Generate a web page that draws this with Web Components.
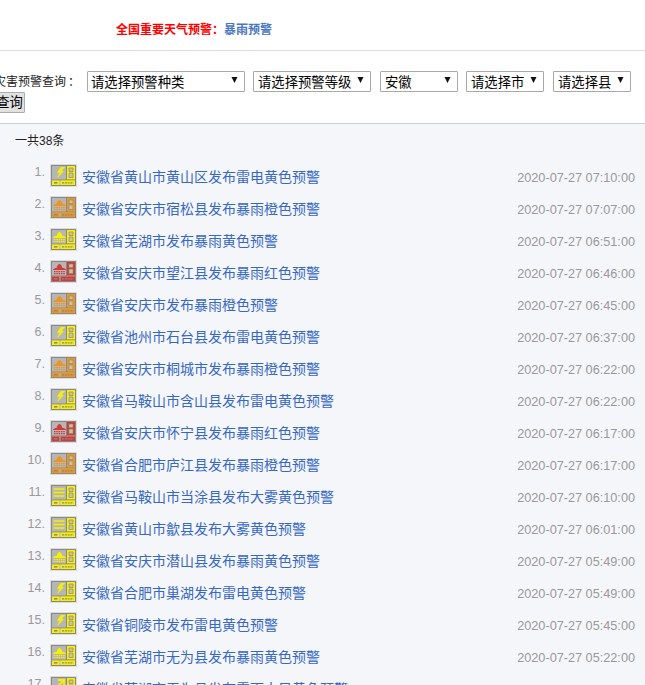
<!DOCTYPE html>
<html lang="zh">
<head>
<meta charset="utf-8">
<title>预警列表</title>
<style>
  html, body { margin: 0; height: 685px; overflow: hidden; background: #fff; }
  body { font-family: "Liberation Sans", "Noto Sans CJK SC", sans-serif; }
</style>
</head>
<body>
<top-notice label="全国重要天气预警" value="暴雨预警"></top-notice>
<filter-bar>
  <fake-select style="width:158px;margin-right:8px;padding-left:3px" text="请选择预警种类"></fake-select>
  <fake-select style="width:118px;margin-right:9px" text="请选择预警等级"></fake-select>
  <fake-select style="width:78px;margin-right:8px" text="安徽"></fake-select>
  <fake-select style="width:78px;margin-right:9px" text="请选择市"></fake-select>
  <fake-select style="width:78px" text="请选择县"></fake-select>
</filter-bar>
<alert-list id="list" total="一共38条"></alert-list>

<script>
const LATIN = '"Liberation Sans", "Noto Sans CJK SC", sans-serif';
// the TC face centres the full-width colon, as the reference does
const COLON = 'font-family: "Noto Sans CJK TC", sans-serif; font-style: normal;';

class TopNotice extends HTMLElement {
  connectedCallback() {
    this.attachShadow({ mode: 'open' }).innerHTML = `
    <style>
      :host {
        display: block;
        height: 51px;
        box-sizing: border-box;
        padding: 20px 0 0 116px;
        border-bottom: 1px solid #ddd;
        font: bold 12px/17px ${LATIN};
      }
      .label { color: #f00; }
      .label i { ${COLON} }
      .value { color: #4a76c4; }
    </style>
    <span class="label">${this.getAttribute('label')}<i>：</i></span><span class="value">${this.getAttribute('value')}</span>`;
  }
}

class FakeSelect extends HTMLElement {
  connectedCallback() {
    this.attachShadow({ mode: 'open' }).innerHTML = `
    <style>
      :host {
        display: flex;
        flex: none;
        align-items: center;
        justify-content: space-between;
        box-sizing: border-box;
        height: 21px;
        padding: 0 4px;
        border: 1px solid #a9a9a9;
        border-radius: 1px;
        background: #fff;
        color: #000;
        font: 13.33px/19px ${LATIN};
      }
      span { margin-top: 1px; }
      svg { flex: none; margin: -3px 1px 0 0; }
    </style>
    <span>${this.getAttribute('text')}</span>
    <svg width="9" height="8" viewBox="0 0 9 8"><path d="M1.500 1h6L4.500 7z" fill="#111"/></svg>`;
  }
}

class FilterBar extends HTMLElement {
  connectedCallback() {
    this.attachShadow({ mode: 'open' }).innerHTML = `
    <style>
      :host {
        display: block;
        height: 73px;
        box-sizing: border-box;
        padding-top: 20px;
        margin-left: -6px;
        border-bottom: 1px solid #c8d0dc;
        white-space: nowrap;
      }
      .row { display: flex; align-items: center; height: 21px; }
      .label {
        flex: none;
        width: 93px;
        color: #222;
        font: 12px/21px ${LATIN};
      }
      .label i { ${COLON} margin-left: 2px; }
      button {
        display: block;
        width: 31px;
        height: 21px;
        padding: 0;
        border: 1px solid #adadad;
        border-radius: 1px;
        background: #e1e1e1;
        color: #000;
        font: 13.33px/19px ${LATIN};
      }
    </style>
    <div class="row"><span class="label">灾害预警查询<i>：</i></span><slot></slot></div>
    <button>查询</button>`;
  }
}

// icon kinds: t = thunder, c = cloud and rain, f = fog, w = wind
const ICON_COLORS = { y: '#f7f000', o: '#ee9420', r: '#d23a3a' };

class AlertIcon extends HTMLElement {
  connectedCallback() {
    const c = ICON_COLORS[this.getAttribute('level')];
    const kind = this.getAttribute('kind');
    const pictures = {
      t: `<path d="M11 3h4l-3.500 4h2.500l-7 7.500 2.500-6h-2.500z" fill="${c}"/>`,
      c: `<path d="M3 10c.5-1.500 2-2 3.500-2 .8-2.500 2-4 3-4s2.200 1.500 3 4c1.500 0 3 .5 3.500 2z" fill="${c}"/>
          <path d="M4 11.700h11M4 13.700h11" stroke="${c}" stroke-width="1.200" stroke-dasharray="1.500 .8" fill="none"/>`,
      f: `<path d="M3.500 5h11M3.500 8.500h11M3.500 12h11" stroke="${c}" stroke-width="1.600" fill="none"/>`,
      w: `<path d="M4 14L14 4M8 4h6v6" stroke="${c}" stroke-width="1.800" fill="none"/>`
    };
    this.attachShadow({ mode: 'open' }).innerHTML = `
    <style>
      :host { display: block; width: 27px; height: 23px; }
      svg { display: block; }
    </style>
    <svg width="27" height="23" viewBox="0 0 27 23">
      <rect width="27" height="23" fill="#dcdcdc"/>
      <rect x="1.500" y="1.500" width="24" height="20" fill="#b6b6b6" stroke="#888"/>
      ${pictures[kind]}
      <rect x="17" y="2" width="8" height="13.500" fill="${c}"/>
      <path d="M19 4h4v3.500h-4zM19 9h4v4.500h-4z" fill="#c9c49c" stroke="#8f8a70" stroke-width=".7"/>
      <path d="M2 16h23.500M16.500 2v14" stroke="#888"/>
      <rect x="2" y="16.500" width="7.500" height="4.500" fill="${c}"/>
      <rect x="10.500" y="16.500" width="14.500" height="4.500" fill="${c}"/>
      <path d="M4 18.800h3.500" stroke="#8f8a70" stroke-width="1.500"/>
      <path d="M12 18.800h11.500" stroke="#8f8a70" stroke-width="1.200" stroke-dasharray="2 .8"/>
    </svg>`;
  }
}

class AlertRow extends HTMLElement {
  connectedCallback() {
    this.attachShadow({ mode: 'open' }).innerHTML = `
    <style>
      :host {
        display: flex;
        align-items: center;
        height: 32px;
        box-sizing: border-box;
      }
      .num {
        width: 45px;
        margin-top: -11px;
        text-align: right;
        color: #999;
        font: 12.500px/14px ${LATIN};
      }
      alert-icon { margin: -3px 5px 0 5px; }
      a {
        flex: 1;
        color: #3768c4;
        font: 14px/20px ${LATIN};
        text-decoration: none;
      }
      time {
        margin: 2px 10px 0 0;
        color: #999;
        font: 12.7px/20px ${LATIN};
      }
    </style>
    <span class="num">${this.getAttribute('n')}.</span>
    <alert-icon level="${this.getAttribute('level')}" kind="${this.getAttribute('kind')}"></alert-icon>
    <a href="#"><slot></slot></a>
    <time>${this.getAttribute('time')}</time>`;
  }
}

class AlertList extends HTMLElement {
  set items(rows) {
    const box = this.shadowRoot.querySelector('.rows');
    box.innerHTML = '';
    rows.forEach((r, i) => {
      const row = document.createElement('alert-row');
      row.setAttribute('n', i + 1);
      row.setAttribute('level', r[1]);
      row.setAttribute('kind', r[2]);
      row.setAttribute('time', '2020-07-27 ' + r[3]);
      row.textContent = r[0];
      box.append(row);
    });
  }
  connectedCallback() {
    this.attachShadow({ mode: 'open' }).innerHTML = `
    <style>
      :host {
        display: block;
        height: 561px;
        overflow: hidden;
        background: #f5f6fa;
      }
      .total {
        padding: 9px 0 0 15px;
        height: 28px;
        color: #222;
        font: 12px/17px ${LATIN};
      }
    </style>
    <div class="total">${this.getAttribute('total')}</div>
    <div class="rows"></div>`;
  }
}

customElements.define('top-notice', TopNotice);
customElements.define('fake-select', FakeSelect);
customElements.define('filter-bar', FilterBar);
customElements.define('alert-icon', AlertIcon);
customElements.define('alert-row', AlertRow);
customElements.define('alert-list', AlertList);

document.getElementById('list').items = [
  ['安徽省黄山市黄山区发布雷电黄色预警', 'y', 't', '07:10:00'],
  ['安徽省安庆市宿松县发布暴雨橙色预警', 'o', 'c', '07:07:00'],
  ['安徽省芜湖市发布暴雨黄色预警', 'y', 'c', '06:51:00'],
  ['安徽省安庆市望江县发布暴雨红色预警', 'r', 'c', '06:46:00'],
  ['安徽省安庆市发布暴雨橙色预警', 'o', 'c', '06:45:00'],
  ['安徽省池州市石台县发布雷电黄色预警', 'y', 't', '06:37:00'],
  ['安徽省安庆市桐城市发布暴雨橙色预警', 'o', 'c', '06:22:00'],
  ['安徽省马鞍山市含山县发布雷电黄色预警', 'y', 't', '06:22:00'],
  ['安徽省安庆市怀宁县发布暴雨红色预警', 'r', 'c', '06:17:00'],
  ['安徽省合肥市庐江县发布暴雨橙色预警', 'o', 'c', '06:17:00'],
  ['安徽省马鞍山市当涂县发布大雾黄色预警', 'y', 'f', '06:10:00'],
  ['安徽省黄山市歙县发布大雾黄色预警', 'y', 'f', '06:01:00'],
  ['安徽省安庆市潜山县发布暴雨黄色预警', 'y', 'c', '05:49:00'],
  ['安徽省合肥市巢湖发布雷电黄色预警', 'y', 't', '05:49:00'],
  ['安徽省铜陵市发布雷电黄色预警', 'y', 't', '05:45:00'],
  ['安徽省芜湖市无为县发布暴雨黄色预警', 'y', 'c', '05:22:00'],
  ['安徽省芜湖市无为县发布雷雨大风黄色预警', 'y', 'w', '05:20:00']
];
</script>
</body>
</html>
